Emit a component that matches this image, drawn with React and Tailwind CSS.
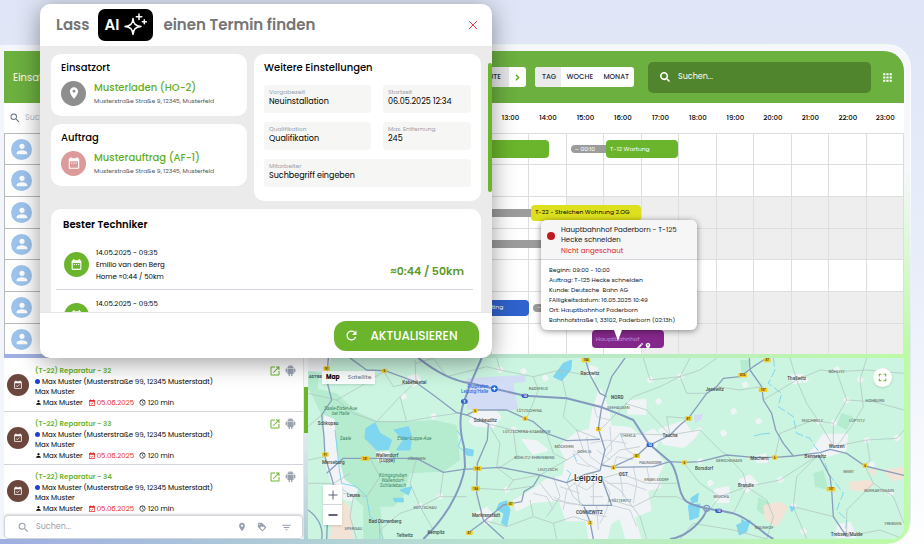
import { useState } from 'react';
import { ChevronRight } from 'lucide-react';
import { AiFillAndroid } from 'react-icons/ai';
import { FaSearch } from 'react-icons/fa';
import {
  MdAccessTime,
  MdApps,
  MdCreate,
  MdDateRange,
  MdEventAvailable,
  MdFilterList,
  MdFullscreen,
  MdLoyalty,
  MdOpenInNew,
  MdPerson,
  MdPlace,
  MdRefresh,
  MdSearch,
} from 'react-icons/md';

const FIRST_HOUR = 5;
const HOURS = Array.from({ length: 19 }, (_, i) => i + FIRST_HOUR);

const percent = (hours) => `${(hours / HOURS.length) * 100}%`;

// offFrom: the hour after which the technician is off duty
const rows = [
  {
    bars: [
      { from: 10, to: 14.53, look: 'h-[18px] rounded-sm bg-[#6bb52d]' },
      { from: 15.11, to: 16.1, label: '– 00:10', look: 'h-2 rounded-l-full bg-[#9c9c9c] text-white' },
      { from: 16.05, to: 17.98, label: 'T-12 Wartung', look: 'h-[18px] rounded-sm bg-[#6bb52d] text-white' },
    ],
  },
  { bars: [] },
  {
    offFrom: 15,
    bars: [
      { from: 10, to: 14.1, look: 'h-2 bg-[#9c9c9c]' },
      { from: 14.05, to: 16.98, label: 'T-22 - Streichen Wohnung 2.OG', look: 'h-4 rounded-sm bg-[#dde01c] text-black' },
    ],
  },
  { offFrom: 15, bars: [{ from: 10, to: 15, look: 'h-2 bg-[#9c9c9c]' }] },
  { bars: [] },
  {
    offFrom: 15,
    bars: [
      { from: 11, to: 14, label: 'Einrichting', look: 'h-4 rounded-sm bg-[#2f62cc] text-white justify-end pr-[26px]' },
      { from: 14.1, to: 15, label: '–', look: 'h-2 rounded-l-full bg-[#9c9c9c] text-white' },
    ],
  },
  {
    offFrom: 17,
    bars: [{ from: 15.67, to: 17.6, label: 'Hauptbahnhof', look: 'h-[18px] rounded-sm bg-[#84278a] text-[#c58fc8]', edit: true }],
  },
];

const orders = [32, 33, 34];

function SparkleIcon({ className }) {
  return (
    <svg viewBox="0 0 24 24" className={className} fill="none" stroke="currentColor" strokeWidth="1.5" strokeLinecap="round" strokeLinejoin="round">
      <path d="M10 5.500C10.500 11 12.500 13 18 13.500C12.500 14 10.500 16 10 21.500C9.500 16 7.500 14 2 13.500C7.500 13 9.500 11 10 5.500z" />
      <path d="M16 1v5.500M13.300 3.700h5.500M21.300 6.800v4M19.300 8.800h4" />
    </svg>
  );
}

function PlannerHeader() {
  const [view, setView] = useState('TAG');
  return (
    <header className="flex h-[52px] shrink-0 items-center rounded-tr-[20px] bg-[#6cb040] pr-[10px] pl-[9px] text-white">
      <span className="text-[10px]">Einsatz</span>
      <div className="flex-1" />
      <div className="flex h-5 overflow-hidden rounded-[3px] bg-white text-[7px] font-medium text-gray-800">
        <button className="bg-[#e6e6e6] px-2">HEUTE</button>
        <button aria-label="Weiter" className="px-1 text-[#5bb01c]">
          <ChevronRight size={9} strokeWidth={4} />
        </button>
      </div>
      <div className="ml-[9px] flex h-5 w-[99px] justify-between overflow-hidden rounded-[3px] bg-white text-[7px] font-medium text-gray-800">
        {['TAG', 'WOCHE', 'MONAT'].map((name) => (
          <button key={name} onClick={() => setView(name)} className={`px-[5px] ${view === name ? 'bg-[#ebebeb] pl-[7px]' : ''}`}>
            {name}
          </button>
        ))}
      </div>
      <label className="mr-[10px] ml-[14px] flex h-[31px] w-[223px] items-center gap-2 rounded-[5px] bg-[#50852d] px-3">
        <FaSearch size={10} />
        <input aria-label="Suchen" placeholder="Suchen..." className="min-w-0 flex-1 bg-transparent text-[8px] outline-none placeholder:text-white" />
      </label>
      <button aria-label="Apps">
        <MdApps size={13} />
      </button>
    </header>
  );
}

function Bar({ bar }) {
  return (
    <div
      className={`absolute top-1/2 flex -translate-y-1/2 items-center px-1 text-[6px] whitespace-nowrap ${bar.look}`}
      style={{ left: percent(bar.from - FIRST_HOUR), width: percent(bar.to - bar.from) }}
    >
      {bar.label}
      {bar.edit && (
        <span className="absolute right-3 bottom-0 flex h-[6px] overflow-hidden text-white">
          <MdCreate size={8} />
          <MdPlace size={8} />
        </span>
      )}
    </div>
  );
}

function Timeline() {
  return (
    <section className="shrink-0 bg-white">
      <div className="flex h-[30px]">
        <label className="flex w-[188px] items-center gap-1 pl-[5px] text-gray-500">
          <MdSearch size={12} />
          <input aria-label="Techniker suchen" placeholder="Suchen..." className="w-[80px] bg-transparent text-[8px] outline-none" />
        </label>
        <div className="grid flex-1 grid-cols-[repeat(19,minmax(0,1fr))] items-center text-center text-[7px] font-medium">
          {HOURS.map((hour) => (
            <span key={hour}>{hour}:00</span>
          ))}
        </div>
      </div>
      {rows.map((row, i) => (
        <div key={i} className={`flex ${i % 3 ? 'h-8' : 'h-[31px]'}`}>
          <div className="flex w-[188px] items-center border-t border-l border-[#b9b9bd] pl-[6px]">
            <span className="flex size-[21px] items-center justify-center rounded-full bg-[#9dc4ee] text-white">
              <MdPerson size={16} />
            </span>
          </div>
          <div className="relative grid flex-1 grid-cols-[repeat(19,minmax(0,1fr))] border-t border-[#dedede]">
            {HOURS.map((hour) => (
              <span key={hour} className={`border-r border-[#dedede] ${hour >= row.offFrom ? 'bg-[#eee]' : ''}`} />
            ))}
            {row.bars.map((bar) => (
              <Bar key={bar.from} bar={bar} />
            ))}
          </div>
        </div>
      ))}
    </section>
  );
}

function JobTooltip() {
  return (
    <div className="absolute top-[220px] left-[541px] z-10 w-[156px] rounded-md bg-white text-[6px] leading-[10px] text-gray-900 shadow-[0_1px_6px_rgba(0,0,0,0.45)]">
      <div className="flex items-start gap-[6px] rounded-t-md border-b border-gray-300 bg-[#f6f6f6] px-[6px] pt-[5px] pb-[3px]">
        <span className="mt-[7px] size-2 shrink-0 rounded-full bg-[#c0191f]" />
        <div className="text-[7px]">
          <p>Hauptbahnhof Paderborn - T-125</p>
          <p>Hecke schneiden</p>
          <p className="mt-px text-[#d8252c]">Nicht angeschaut</p>
        </div>
      </div>
      <div className="px-2 py-[5px] whitespace-nowrap">
        <p>Beginn: 09:00 - 10:00</p>
        <p>Auftrag: T-125 Hecke schneiden</p>
        <p>Kunde: Deutsche&nbsp; Bahn AG</p>
        <p>FAlligkeitsdatum: 16.05.2025 10:49</p>
        <p>Ort: Hauptbahnhof Paderborn</p>
        <p>Bahnhofstraße 1, 33102, Paderborn (02:13h)</p>
      </div>
      <span className="absolute top-full left-[73px] border-x-4 border-t-[11px] border-x-transparent border-t-white" />
    </div>
  );
}

function OrderList() {
  return (
    <section className="flex w-[300px] shrink-0 flex-col border-r border-gray-200 bg-white">
      <ul className="min-h-0 flex-1 overflow-hidden pt-px">
        {orders.map((no) => (
          <li key={no} className="flex h-[53px] items-center gap-[6px] border-b border-gray-300 pr-[6px] pl-[3px] text-[7px]">
            <span className="flex size-[22px] items-center justify-center rounded-full bg-[#6b463d] text-white">
              <MdEventAvailable size={10} />
            </span>
            <div className="flex-1 pt-[3px] leading-[10px]">
              <a href="#auftrag" className="block pb-px font-semibold text-[#6bb52d]">
                (T-22) Reparatur - {no}
              </a>
              <p className="flex items-center gap-[2px]">
                <span className="size-[5px] rounded-full bg-[#2540cf]" />
                Max Muster (Musterstraße 99, 12345 Musterstadt)
              </p>
              <p>Max Muster</p>
              <div className="flex items-center gap-[5px] pt-px">
                <span className="flex items-center gap-px">
                  <MdPerson size={7} /> Max Muster
                </span>
                <span className="flex items-center gap-px text-[#e8262c]">
                  <MdEventAvailable size={8} /> 05.06.2025
                </span>
                <span className="flex items-center gap-[2px]">
                  <MdAccessTime size={7} /> 120 min
                </span>
              </div>
            </div>
            <div className="flex items-center gap-[3px] self-start pt-[5px]">
              <button aria-label="Öffnen" className="text-[#6bb52d]">
                <MdOpenInNew size={12} />
              </button>
              <AiFillAndroid size={13} className="text-gray-400" />
            </div>
          </li>
        ))}
      </ul>
      <label className="flex h-6 items-center gap-[6px] rounded-sm border border-gray-300 bg-white pr-[10px] pl-3 text-gray-400 shadow-[0_-1px_2px_rgba(0,0,0,0.15)]">
        <MdSearch size={13} />
        <input aria-label="Auftrag suchen" placeholder="Suchen..." className="min-w-0 flex-1 bg-transparent text-[8px] outline-none placeholder:text-gray-400" />
        <MdPlace size={10} />
        <MdLoyalty size={10} className="ml-[4px]" />
        <MdFilterList size={11} className="ml-2" />
      </label>
    </section>
  );
}

const motorways = [
  'M545 24L512 100L492 155C476 200 478 240 492 290L495 350C482 430 430 510 370 567',
  'M355 24C400 60 450 92 512 100L590 118L675 137L800 145L900 170L960 193L1000 210L1045 280L1110 335C1140 370 1130 430 1160 455C1200 480 1260 478 1300 490C1350 505 1380 545 1420 567',
  'M1220 478C1215 500 1170 560 1110 567',
];

const mainRoads = [
  'M85 24L80 90L95 150L65 195L72 260L75 320L100 400L85 450L80 567',
  'M150 24L200 60L255 62L345 95L400 135L470 188L500 195L530 180L620 180L675 205L700 215L740 250L800 272L900 268',
  'M80 370L130 325L190 325L350 325L430 367L490 358L600 352L720 375L800 398L850 375L900 362L915 300L895 235L905 170L935 80L975 24',
  'M855 24L870 75L900 130L920 140',
  'M500 195L565 222L562 270L532 340L530 430L550 510L612 567',
  'M500 552L550 515L610 465L665 455L672 425L700 408L720 375',
  'M905 345L940 352L1060 350L1110 335L1150 337L1200 335L1280 315L1360 322L1425 322L1480 318L1560 308L1590 298L1640 310L1695 348L1812 376',
  'M1400 24L1360 50L1320 80L1270 85L1250 110L1220 130L1165 205L1140 225L1110 255L1040 290L1010 318L935 352',
  'M1348 24L1350 60L1385 110L1390 150L1415 190L1427 240L1450 280L1480 318',
  'M1555 315L1590 380L1595 420L1600 500L1640 560',
  'M24 480C60 505 70 540 65 567',
  'M845 466L935 466L905 385M880 567L870 515L852 470',
];

const localRoads = [
  'M24 130L110 150L160 190L230 215L320 215L400 200L470 190',
  'M345 30L348 95L300 140L230 215M348 40L400 24M250 62L280 110L345 95',
  'M210 325L240 380L200 440L130 430M350 325L330 400L360 470L300 490L240 540L250 567',
  'M360 470L420 440L500 440M360 470L400 540M420 440L430 367',
  'M565 222L640 240L740 250M565 222L600 280L590 352M640 240L650 320L600 352',
  'M590 24L600 60L700 80L780 60L855 75M700 80L715 120L680 205M780 60L800 145',
  'M800 145L790 200L830 240L900 268M830 240L850 300L800 330L720 375M740 250L760 310L800 330',
  'M530 415L620 420L700 408M550 510L620 530L700 500L760 520L820 500L870 515M700 500L690 450',
  'M760 520L770 567M720 400L760 450L850 466M800 398L820 440L850 466M760 380L780 440L740 500',
  'M860 380L830 410L840 466M880 370L880 466M905 385L960 420L1020 500L1040 567M905 385L960 370L1040 400L1130 400',
  'M905 345L960 300L1020 290M915 300L960 250L1100 255M900 240L940 200L1000 140L1080 110L1140 80L1200 60L1250 24',
  'M975 160L1040 180L1110 255L1200 240L1260 300L1280 315M1140 80L1160 130L1220 130M1030 24L1050 90L1140 80L1170 24',
  'M1110 255L1100 200L1165 205M1250 110L1320 120L1385 110M1280 315L1330 370L1340 410L1400 450L1420 500L1400 567',
  'M1340 410L1260 440L1200 400L1150 337M1340 410L1300 490M1340 410L1440 390L1555 315M1260 440L1230 478',
  'M1470 24L1490 90L1520 160L1560 220L1600 290M1490 90L1560 60L1610 65L1700 60L1812 70M1610 65L1640 150L1600 220L1600 290',
  'M1700 24L1680 90L1690 170L1660 220L1610 290M1640 150L1720 155L1812 180M1600 290L1700 270L1790 265L1812 240',
  'M1700 270L1710 330L1695 348M1695 348L1720 400L1780 440L1812 520M1720 400L1640 480L1640 560L1740 540L1812 567',
  'M1555 315L1490 380L1480 470L1520 567M1480 470L1600 500M1425 322L1440 250L1540 210L1600 220M1390 150L1490 90',
  'M1140 567L1180 520L1300 540L1400 567M1060 440L1130 440L1160 455M935 450L1000 470L1060 440L1080 400',
  'M24 230L65 195M24 330L75 320M24 400L100 400L160 440L150 500L170 567M100 400L150 370',
  'M110 150L180 110L255 62M400 24L440 80L560 50L600 60M320 215L300 140M590 352L640 390L620 420M640 390L720 375',
];

const cityStreets = [
  'M820 300L860 340L900 362M860 260L870 320L905 345M930 230L935 300L915 320M960 250L980 300L1010 318',
  'M850 375L800 420L790 480M820 400L860 420L905 385M780 410L840 430M905 385L930 430L920 480L900 520',
  'M920 400L980 400L1040 420M935 466L990 480L1010 530M960 370L970 440M1000 350L1010 400L1000 460M1040 350L1050 400',
  'M870 440L910 440M860 490L920 500M890 466L895 540M940 352L950 320L1000 330M760 440L800 460L850 466',
  'M880 160L890 200L930 210M870 280L920 270L980 280M830 340L870 350M890 300L930 330M700 430L740 440L760 480',
];

const forests = [
  'M24 110L110 130L170 185L230 212L330 215L400 210L470 225L480 330L430 365L330 370L310 440L280 470L190 470L120 400L105 280Z',
  'M190 470L240 460L250 567L190 567Z',
  'M24 60L60 70L50 130L24 120Z',
  'M985 300L1020 290L1040 345L1000 345Z',
  'M1625 190L1660 200L1640 240L1610 225Z',
  'M1375 440L1410 460L1400 500L1370 480Z',
  'M1540 370L1570 360L1585 420L1545 410Z',
  'M1320 30L1350 30L1340 80L1325 70Z',
];

const towns = [
  'M790 380L800 330L780 290L830 250L870 240L880 180L900 120L925 180L930 230L990 235L1020 260L1060 240L1080 260L1060 300L1090 340L1070 380L1080 410L1040 420L1050 480L1000 500L1020 567L980 567L960 500L930 520L920 567L870 567L860 510L800 510L780 450L700 455L650 480L640 455L700 420L740 390Z',
  'M1080 240L1150 215L1175 250L1200 235L1180 265L1150 290L1090 280Z',
  'M510 215L530 170L570 165L600 200L580 230L525 225Z',
  'M24 24L90 24L80 60L24 60Z',
  'M75 200L100 210L105 300L130 390L170 420L155 450L110 440L80 340Z',
  'M1570 255L1640 255L1635 300L1590 315L1520 320L1540 300Z',
  'M985 155L1035 150L1035 190L985 190Z',
  'M1320 390L1350 378L1370 400L1340 425Z',
  'M1245 420L1285 412L1285 455L1250 455Z',
  'M530 490L560 475L580 500L560 522Z',
  'M1475 78L1505 75L1500 96L1482 98Z',
  'M1615 525L1650 520L1665 560L1610 560Z',
  'M325 82L350 75L362 96L340 106Z',
  'M230 310L265 308L265 332L238 332Z',
  'M1365 322L1395 314L1400 335L1372 335Z',
  'M870 50L890 55L880 80L860 70Z',
  'M670 270L710 275L740 300L700 310Z',
];

const townDots = [
  [670, 65], [735, 85], [600, 60], [640, 240], [310, 140], [400, 200], [360, 470], [420, 440], [620, 420], [1140, 80], [1050, 90],
  [1075, 155], [1300, 185], [1335, 105], [1375, 215], [1515, 90], [1610, 60], [1640, 152], [1700, 272], [1790, 265], [1555, 215],
  [1715, 345], [1510, 545], [1480, 470], [1270, 250], [1200, 335], [1230, 400], [1680, 90], [1600, 220], [1770, 430], [1440, 390],
];

const lakes = [
  'M198 235L225 218L240 250L275 270L265 298L230 300L195 265Z',
  'M282 240L325 230L335 260L330 300L290 300L310 270Z',
  'M790 40L815 30L812 60L785 92L760 80Z',
  'M598 460L620 452L630 480L620 528L605 520L612 490L590 478Z',
  'M495 295L520 300L518 318L500 315Z',
  'M280 445L310 445L310 456L285 455Z',
  'M300 420L335 410L325 435Z',
  'M1172 445L1195 430L1192 455L1175 458Z',
  'M1165 465L1200 462L1195 500L1170 510Z',
  'M1310 525L1350 510L1340 545L1318 555Z',
  'M1325 508L1335 515L1325 520Z',
  'M1470 468L1485 475L1475 485Z',
];

const places = [
  [343, 102, 'Kabelsketal'], [122, 180, 'Saale-Elster-Aue', 'park'], [122, 196, 'bei Halle', 'park'], [84, 226, 'Schkopau'],
  [137, 269, 'Saale', 'park'], [343, 269, 'Elster-Luppe-Aue', 'park'], [100, 342, 'Merseburg'], [261, 320, 'Wallendorf'],
  [261, 336, '(Luppe)'], [279, 380, 'Königsgruben', 'park'], [279, 396, 'Wallendorf-', 'park'], [279, 412, 'Schladebach', 'park'],
  [160, 442, 'Leuna'], [255, 518, 'Bad Dürrenberg'], [408, 553, 'Kempitz'], [314, 562, 'Teltwitz'], [556, 215, 'Schkeuditz'],
  [558, 502, 'Markranstädt'], [870, 74, 'Rackwitz'], [375, 476, 'KÖTZSCHAU', 'small'], [350, 331, 'ZÖSCHEN', 'small'],
  [160, 541, 'SPERGAU', 'small'], [715, 121, 'RADEFELD', 'small'], [688, 187, 'LÜTZSCHENA', 'small'],
  [680, 250, 'LÜTZSCHENA-STAHMELN', 'small'], [792, 294, 'MÖCKERN', 'small'], [853, 309, 'GOHLIS', 'small'],
  [703, 328, 'BÖHLITZ-EHRENBERG', 'small'], [743, 363, 'LEUTZSCH', 'small'], [868, 492, 'CONNEWITZ', 'big'],
  [952, 147, 'NORD', 'big'], [955, 176, 'SEEHAUSEN', 'small'], [985, 261, 'THEKLA', 'small'], [1110, 262, 'Taucha'],
  [1052, 343, 'PAUNSDORF', 'small'], [970, 378, 'OST', 'big'], [1070, 394, 'ENGELSDORF', 'small'],
  [960, 455, 'STÖTTERITZ', 'small'], [1244, 123, 'Jesewitz'], [1287, 335, 'GERICHSHAIN', 'small'], [1212, 361, 'Borsdorf'],
  [1378, 329, 'Machern'], [1338, 412, 'Brandis'], [1264, 445, 'BEUCHA', 'small'], [1392, 536, 'NAUNHOF', 'small'],
  [1490, 91, 'Thallwitz'], [1610, 68, 'BÖHLITZ', 'small'], [1725, 157, 'HOHBURG', 'small'], [1537, 217, 'NISCHWITZ', 'small'],
  [1671, 216, 'LÜPTITZ', 'small'], [1610, 293, 'Wurzen'], [1546, 323, 'Bennewitz'], [1646, 369, 'NEMT', 'small'],
  [1737, 426, 'BURKARTSHAIN', 'small'], [1640, 557, 'Trebsen/Mulde'], [1778, 525, 'TREBSEN', 'small'],
];

const placeLooks = {
  park: { fontSize: 14, fill: '#3e8460', fontStyle: 'italic' },
  small: { fontSize: 12, fill: '#6b7777', fontWeight: 500 },
  big: { fontSize: 14, fill: '#4b5563', fontWeight: 700 },
  town: { fontSize: 14, fill: '#3f4a4a', fontWeight: 500 },
};

const shields = [
  [80, 55, '91'], [253, 62, '6'], [76, 313, '91'], [195, 325, '181'], [525, 182, '6'], [675, 205, '6'], [858, 30, '184'],
  [895, 237, '2'], [532, 355, '181'], [527, 415, '186'], [632, 461, '87'], [508, 548, '87'], [870, 518, '2'], [940, 352, '6'],
  [1010, 317, '87'], [1153, 337, '6'], [1165, 205, '87'], [1328, 75, '87A'], [1389, 119, '107'], [1402, 30, '87'],
  [1424, 322, '6'], [1695, 346, '6'], [1593, 417, '107'],
];

const motorwayShields = [[493, 154, '9'], [675, 137, '14'], [1050, 284, '14'], [1256, 482, '14']];

function RegionMap() {
  return (
    <svg viewBox="24 24 1788 543" preserveAspectRatio="xMidYMid slice" className="absolute inset-0 size-full font-['Roboto',sans-serif]" aria-label="Karte Leipzig">
      <rect x="-400" y="-400" width="2600" height="1400" fill="#cbf5e0" />
      <g fill="#b5ebcf">{forests.map((d) => <path key={d} d={d} />)}</g>
      <g fill="#f1f4f6" stroke="#f1f4f6" strokeWidth="8" strokeLinejoin="round">
        {towns.map((d) => <path key={d} d={d} />)}
        {townDots.map(([x, y]) => <path key={`${x}-${y}`} d={`M${x - 5} ${y - 3}l7 -4l5 7l-8 5z`} />)}
      </g>
      <path d="M500 85L675 75L678 95L640 100L655 180L500 178Z" fill="#d2dcf4" />
      <path d="M1182 195L1208 192L1205 208L1185 218Z" fill="#d2dcf4" />
      <g fill="#f3e3d7">
        <path d="M125 450L150 470L160 567L90 567L95 520Z" />
        <path d="M1390 465L1440 455L1465 470L1445 510L1430 530L1395 510Z" />
        <path d="M1645 395L1700 390L1725 400L1700 425L1650 420ZM1745 360L1812 350L1812 385L1780 395ZM1700 360L1730 355L1725 380Z" />
      </g>
      <g fill="#7ed6f0" stroke="#7ed6f0" strokeWidth="3" strokeLinejoin="round">{lakes.map((d) => <path key={d} d={d} />)}</g>
      <g fill="none" stroke="#7ed6f0" strokeWidth="3">
        <path d="M105 240L112 300L118 360L125 400L170 410L200 440L210 500L238 520L240 567" />
        <path d="M470 240L485 260L475 290L500 310L520 305" />
        <path strokeDasharray="26 8" d="M1420 24L1425 60L1405 100L1445 130L1435 170L1480 200L1490 250L1530 265L1545 290L1570 320L1585 370L1630 430L1610 480L1640 510L1635 555" />
        <path d="M1362 258L1385 252L1410 250M800 400L812 370L800 360M820 310L830 335" />
      </g>
      <g fill="none" stroke="#aebfbe" strokeWidth="2">{localRoads.map((d) => <path key={d} d={d} />)}</g>
      <g fill="none" stroke="#cdd4dd" strokeWidth="3">{cityStreets.map((d) => <path key={d} d={d} />)}</g>
      <g fill="none" stroke="#8a9fbd" strokeWidth="4" strokeLinejoin="round">{mainRoads.map((d) => <path key={d} d={d} />)}</g>
      <g fill="none" stroke="#8399c0" strokeWidth="6" strokeLinejoin="round">{motorways.map((d) => <path key={d} d={d} />)}</g>
      <circle cx="1220" cy="475" r="9" fill="none" stroke="#8399c0" strokeWidth="4" />
      <g textAnchor="middle" fontSize="9" fontWeight="700">
        {shields.map(([x, y, no]) => (
          <g key={`${x}-${y}`}>
            <rect x={x - 4 - no.length * 3} y={y - 6} width={8 + no.length * 6} height="13" rx="2" fill="#f2cc2e" />
            <text x={x} y={y + 4} fill="#4b4420">{no}</text>
          </g>
        ))}
        {motorwayShields.map(([x, y, no]) => (
          <g key={`${x}-${y}`}>
            <rect x={x - 10} y={y - 6} width="20" height="13" rx="5" fill="#2f62c8" />
            <text x={x} y={y + 4} fill="#fff">{no}</text>
          </g>
        ))}
      </g>
      <g textAnchor="middle">
        {places.map(([x, y, name, kind = 'town']) => (
          <text key={name + y} x={x} y={y} {...placeLooks[kind]}>{name}</text>
        ))}
        <text x="865" y="392" fontSize="27" fontWeight="500" fill="#27302f" stroke="#fff" strokeWidth="3" paintOrder="stroke">Leipzig</text>
      </g>
      <g textAnchor="end" fontSize="14" fontWeight="500" fill="#2f6fdc">
        <text x="565" y="113">Flughafen</text>
        <text x="565" y="130">Leipzig/Halle</text>
      </g>
      <circle cx="583" cy="116" r="10" fill="#1a66e0" />
      <path d="M583 110v12M577 116h12" stroke="#fff" strokeWidth="3" />
      <text x="26" y="84" fontSize="13" fontWeight="700" fill="#4b5563">ADTBE</text>
    </svg>
  );
}

function MapPanel() {
  return (
    <section className="relative flex-1 overflow-hidden rounded-br-xl">
      <RegionMap />
      <div className="absolute top-[13px] left-[14px] flex h-[13px] items-center gap-2 bg-white/90 px-1 text-[6px] shadow-sm">
        <button className="font-bold">Map</button>
        <button className="text-gray-500">Satellite</button>
      </div>
      <div className="absolute bottom-[14px] left-[15px] flex w-[19px] flex-col divide-y divide-gray-300 bg-white text-gray-600 shadow">
        {[['Vergrößern', 'M5 10h10M10 5v10', 1], ['Verkleinern', 'M5 10h10', 2]].map(([name, d, width]) => (
          <button key={name} aria-label={name} className="flex h-5 items-center justify-center">
            <svg viewBox="0 0 20 20" className="size-[18px]" stroke="currentColor" strokeWidth={width}>
              <path d={d} />
            </svg>
          </button>
        ))}
      </div>
      <button aria-label="Vollbild" className="absolute top-[10px] right-[12px] flex size-[19px] items-center justify-center rounded-full bg-white text-[#6bb52d] shadow">
        <MdFullscreen size={13} />
      </button>
    </section>
  );
}

function PlaceCard({ title, name, color, icon: Icon }) {
  return (
    <section className="h-[62px] rounded-[10px] bg-white px-[10px] pt-[6px]">
      <h3 className="text-[10px] leading-4 font-medium">{title}</h3>
      <div className="mt-1 flex items-center gap-2">
        <span className={`flex size-[25px] items-center justify-center rounded-full text-white ${color}`}>
          <Icon size={14} />
        </span>
        <div>
          <p className="text-[10px] leading-4 font-medium text-[#5fae22]">{name}</p>
          <p className="text-[6px] leading-[10px] text-gray-600">Musterstraße Straße 9, 12345, Musterfeld</p>
        </div>
      </div>
    </section>
  );
}

function Field({ label, value, wide }) {
  return (
    <label className={`flex h-7 flex-col rounded-[3px] bg-[#f6f6f4] px-[5px] pt-[3px] ${wide ? 'col-span-2' : ''}`}>
      <span className="text-[6px] leading-2 text-gray-400">{label}</span>
      <input defaultValue={value} className="h-3 w-full bg-transparent text-[8px] leading-3 outline-none" />
    </label>
  );
}

function Technician({ date, action }) {
  return (
    <li className="ml-[5px] flex h-[51px] items-center border-b border-gray-300 pr-[9px] pl-2">
      <span className="flex size-[25px] items-center justify-center rounded-full bg-[#6bb52d] text-white">
        <MdDateRange size={13} />
      </span>
      <div className="ml-[7px] flex-1 pt-[2px] text-[7px] leading-3">
        <p>{date}</p>
        <p>Emilio van den Berg</p>
        <p>Home ≈0:44 / 50km</p>
      </div>
      {action && <span className="pt-[15px] text-[11px] font-semibold text-[#5c9a2c]">≈0:44 / 50km</span>}
    </li>
  );
}

function AppointmentDialog() {
  return (
    <div
      role="dialog"
      aria-label="Termin finden"
      className="absolute top-1 left-10 z-20 flex h-[354px] w-[452px] flex-col overflow-hidden rounded-[10px] bg-white shadow-[0_4px_24px_rgba(0,0,0,0.4)]"
    >
      <header className="flex h-[42px] shrink-0 items-center px-4 text-[15px] font-semibold text-[#757575]">
        <span>Lass</span>
        <span className="mr-[10px] ml-[9px] flex h-8 w-[55px] items-center justify-center gap-1 rounded-[7px] bg-black text-white">
          AI <SparkleIcon className="size-6" />
        </span>
        <h2>einen Termin finden</h2>
        <button aria-label="Schließen" className="mr-[-2px] ml-auto text-[#e0433f]">
          <svg viewBox="0 0 10 10" className="size-[10px]" stroke="currentColor" strokeWidth="1">
            <path d="M1 1l8 8M9 1l-8 8" />
          </svg>
        </button>
      </header>
      <div className="relative min-h-0 flex-1 overflow-hidden border-b border-gray-200 bg-[#ebebeb] pt-2 pr-[11px] pl-[11px]">
        <div className="grid grid-cols-[196px_1fr] gap-[7px]">
          <div className="flex flex-col gap-2">
            <PlaceCard title="Einsatzort" name="Musterladen (HO-2)" color="bg-[#8e8e8e]" icon={MdPlace} />
            <PlaceCard title="Auftrag" name="Musterauftrag (AF-1)" color="bg-[#dd9a9a]" icon={MdDateRange} />
          </div>
          <section className="h-[147px] rounded-[10px] bg-white px-[10px] pt-[6px]">
            <h3 className="text-[10px] leading-4 font-medium">Weitere Einstellungen</h3>
            <div className="mt-[9px] grid grid-cols-[107px_1fr] gap-x-3 gap-y-[9px]">
              <Field label="Vorgabezeit" value="Neuinstallation" />
              <Field label="Startzeit" value="06.05.2025 12:34" />
              <Field label="Qualifikation" value="Qualifikation" />
              <Field label="Max. Entfernung" value="245" />
              <Field label="Mitarbeiter" value="Suchbegriff eingeben" wide />
            </div>
          </section>
        </div>
        <section className="mt-2 rounded-t-[10px] bg-white pt-2 pr-2">
          <h3 className="pl-3 text-[10px] leading-4 font-semibold">Bester Techniker</h3>
          <ul className="mt-[6px]">
            <Technician date="14.05.2025 - 09:35" action />
            <Technician date="14.05.2025 - 09:55" />
          </ul>
        </section>
        <span className="absolute top-[17px] right-0 h-[129px] w-1 rounded-full bg-[#6bb52d]" />
      </div>
      <footer className="flex h-[45px] shrink-0 items-center justify-end pr-[13px]">
        <button className="flex h-[30px] w-[145px] items-center rounded-xl bg-[#6bb52d] pr-[10px] pl-[10px] text-[12px] font-medium text-white">
          <MdRefresh size={15} />
          <span className="flex-1 text-center">AKTUALISIEREN</span>
        </button>
      </footer>
    </div>
  );
}

export default function App() {
  return (
    <div className="relative flex h-screen flex-col overflow-hidden bg-linear-to-b from-[#dfe5f6] via-[#e9eefa] to-white pt-11 pr-[13px] pb-2 font-['Poppins','Inter',sans-serif] text-black">
      <main className="flex min-h-0 flex-1 flex-col rounded-r-[24px] border-t border-r border-white/70 [background:linear-gradient(#f3f5fc,#f3f5fc)_0_0/4px_calc(100%-5px)_no-repeat,linear-gradient(to_bottom,#f5f7fc_25%,transparent_60%),linear-gradient(to_right,#a0aee2,#b9e4cf_55%,#bdfba6)] pt-[6px] pr-[6px] pb-[5px] pl-1">
        <PlannerHeader />
        <Timeline />
        <div className="mt-1 flex min-h-0 flex-1">
          <OrderList />
          <div className="w-1 shrink-0 bg-linear-to-b from-white to-transparent pt-[29px]">
            <span className="block h-[46px] bg-[#6bb52d]" />
          </div>
          <MapPanel />
        </div>
      </main>
      <JobTooltip />
      <AppointmentDialog />
    </div>
  );
}
